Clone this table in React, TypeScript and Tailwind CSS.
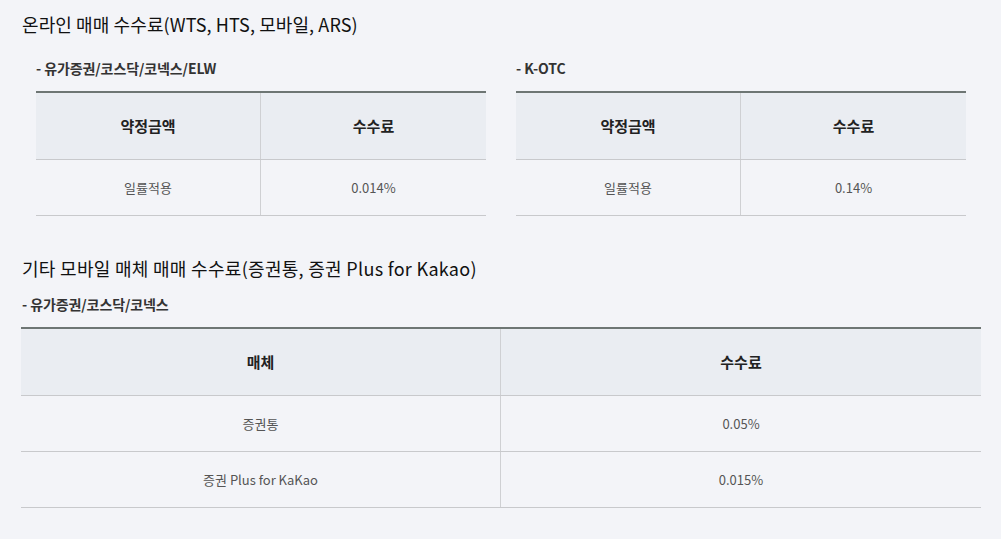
import React from "react";

const font = { fontFamily: '"Noto Sans CJK KR", "Noto Sans", sans-serif' };

function FeeTable({ head, rows }: { head: [string, string]; rows: [string, string][] }) {
  return (
    <div className="border-t-2 border-[#6e7674]">
      <div className="grid grid-cols-2 bg-[#eaedf2] border-b border-[#c8c9cc]">
        <div className="h-[66px] flex items-center justify-center border-r border-[#cfd0d3] text-[15px] font-bold text-[#222]">
          {head[0]}
        </div>
        <div className="h-[66px] flex items-center justify-center text-[15px] font-bold text-[#222]">
          {head[1]}
        </div>
      </div>
      {rows.map((r, i) => (
        <div key={i} className="grid grid-cols-2 border-b border-[#c8c9cc]">
          <div className="h-[55px] flex items-center justify-center border-r border-[#cfd0d3] text-[13px] text-[#555]">
            {r[0]}
          </div>
          <div className="h-[55px] flex items-center justify-center text-[13px] text-[#555]">
            {r[1]}
          </div>
        </div>
      ))}
    </div>
  );
}

export default function App() {
  return (
    <div className="min-h-[539px] bg-[#f3f4f8] pl-[21px] pt-[11px]" style={font}>
      <div className="w-[960px]">
        <h2 className="pl-[1px] text-[18px] leading-[26px] text-[#111] tracking-[0.1px]">
          온라인 매매 수수료(WTS, HTS, 모바일, ARS)
        </h2>
        <div className="mt-[21px] px-[15px] grid grid-cols-2 gap-[30px]">
          <div>
            <h3 className="text-[14px] leading-[20px] font-bold text-[#333] tracking-[-0.1px] mb-[13px]">
              - 유가증권/코스닥/코넥스/ELW
            </h3>
            <FeeTable head={["약정금액", "수수료"]} rows={[["일률적용", "0.014%"]]} />
          </div>
          <div>
            <h3 className="text-[14px] leading-[20px] font-bold text-[#333] tracking-[-0.1px] mb-[13px]">
              - K-OTC
            </h3>
            <FeeTable head={["약정금액", "수수료"]} rows={[["일률적용", "0.14%"]]} />
          </div>
        </div>
        <h2 className="mt-[39px] pl-[1px] text-[18px] leading-[26px] text-[#111] tracking-[0.3px]">
          기타 모바일 매체 매매 수수료(증권통, 증권 Plus for Kakao)
        </h2>
        <h3 className="mt-[13px] pl-[1px] text-[14px] leading-[20px] font-bold text-[#333] tracking-[-0.1px] mb-[13px]">
          - 유가증권/코스닥/코넥스
        </h3>
        <FeeTable
          head={["매체", "수수료"]}
          rows={[
            ["증권통", "0.05%"],
            ["증권 Plus for KaKao", "0.015%"],
          ]}
        />
      </div>
    </div>
  );
}
